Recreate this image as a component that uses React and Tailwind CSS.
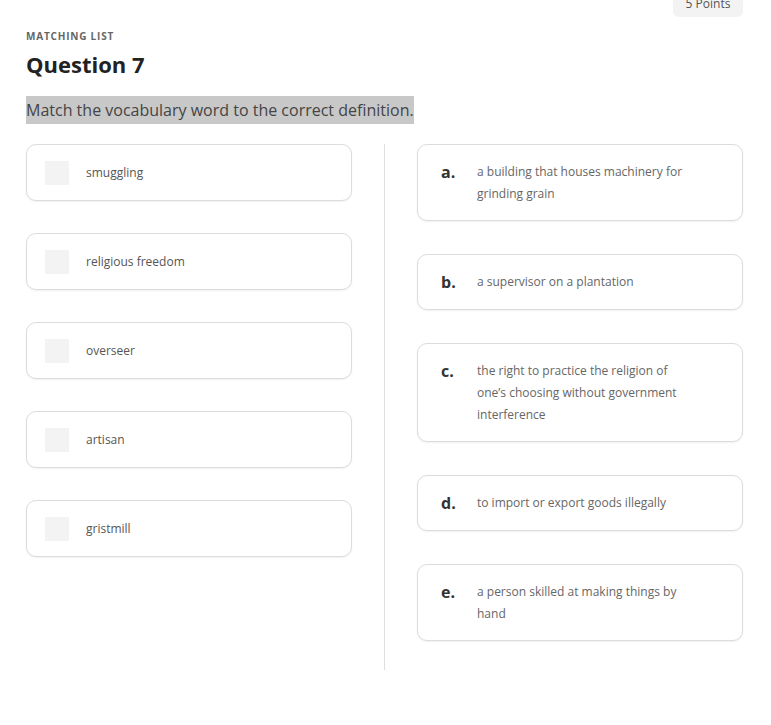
import React from "react";

const terms = ["smuggling", "religious freedom", "overseer", "artisan", "gristmill"];

const defs = [
  { letter: "a.", text: "a building that houses machinery for grinding grain" },
  { letter: "b.", text: "a supervisor on a plantation" },
  {
    letter: "c.",
    text: "the right to practice the religion of one’s choosing without government interference",
  },
  { letter: "d.", text: "to import or export goods illegally" },
  { letter: "e.", text: "a person skilled at making things by hand" },
];

export default function App() {
  return (
    <div
      className="min-h-screen bg-white pl-[26px] pr-[28px] text-[#333]"
      style={{ fontFamily: '"Open Sans", "Noto Sans", sans-serif' }}
    >
      <div className="flex justify-end">
        <div className="-mt-[10px] flex h-[27px] w-[70px] items-end justify-center rounded-b-md bg-[#f3f3f3] pb-[6px] text-[12px] leading-[14px] text-[#555]">
          5 Points
        </div>
      </div>

      <div className="mt-[12px] text-[10px] font-bold uppercase leading-[14px] tracking-[0.08em] text-[#666]">
        Matching List
      </div>
      <h1 className="mt-[6px] text-[22px] font-bold leading-[30px] text-[#222]">Question 7</h1>

      <div className="mt-[17px]">
        <span className="inline-block bg-[#c8c8c8] py-[3px] text-[16px] leading-[22px] text-[#444]">
          Match the vocabulary word to the correct definition.
        </span>
      </div>

      {/* Columns */}
      <div className="mt-[20px] flex pb-[36px]">
        <div className="flex flex-1 flex-col gap-8">
          {terms.map((t) => (
            <div
              key={t}
              className="flex h-[57px] items-center rounded-[10px] border border-[#dcdcdc] bg-white px-[18px] shadow-[0_1px_2px_rgba(0,0,0,0.06)]"
            >
              <div className="h-6 w-6 bg-[#f3f3f3]" />
              <span className="ml-[17px] text-[12px] text-[#555]">{t}</span>
            </div>
          ))}
        </div>

        <div className="mx-8 w-px bg-[#dedede]" />

        <div className="flex flex-1 flex-col gap-[33px] pb-[29px]">
          {defs.map((d) => (
            <div
              key={d.letter}
              className="flex rounded-[10px] border border-[#dcdcdc] bg-white py-[15px] pl-[23px] shadow-[0_1px_2px_rgba(0,0,0,0.06)]"
            >
              <span className="w-9 text-[16px] font-bold leading-[24px] text-[#333]">{d.letter}</span>
              <span className="mt-px w-[215px] text-[12px] leading-[22px] text-[#666]">{d.text}</span>
            </div>
          ))}
        </div>
      </div>
    </div>
  );
}
